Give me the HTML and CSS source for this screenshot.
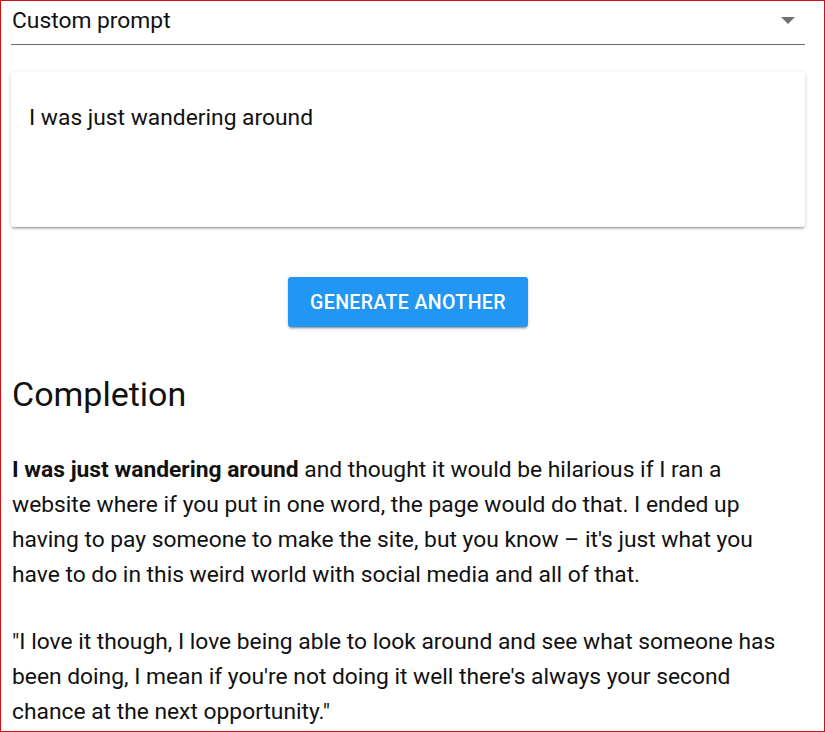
FILE: index.html
```html
<!DOCTYPE html>
<html>
<head>
 <meta charset="UTF-8">
 <title>Completion</title>
 <link rel="stylesheet" href="styles.css">
</head>
<body>
<div class="frame">
  <div class="select">
    <span class="select-text">Custom prompt</span>
    <span class="arrow"></span>
  </div>

  <div class="card">
    <div class="prompt">I was just wandering around</div>
  </div>

  <div class="actions">
    <button type="button" class="btn">Generate another</button>
  </div>

  <h2 class="title">Completion</h2>

  <p class="text"><b>I was just wandering around</b> and thought it would be hilarious if I ran a website where if you put in one word, the page would do that. I ended up having to pay someone to make the site, but you know – it's just what you have to do in this weird world with social media and all of that.</p>
  <p class="text">"I love it though, I love being able to look around and see what someone has been doing, I mean if you're not doing it well there's always your second chance at the next opportunity."</p>
</div>
</body>
</html>
```

FILE: styles.css
```css
html, body {
  margin: 0;
  padding: 0;
  background: #fff;
}
body {
  font-family: Roboto, "Liberation Sans", sans-serif;
  color: #111;
}
.frame {
  box-sizing: border-box;
  width: 825px;
  height: 732px;
  overflow: hidden;
  border: 1px solid #d01010;
  padding: 0 19px 0 10px;
}
.select {
  display: flex;
  align-items: center;
  justify-content: space-between;
  height: 43px;
  border-bottom: 1px solid #6b6b6b;
  padding: 0 10px 0 1px;
  margin-bottom: 27px;
}
.select-text {
  font-size: 22.8px;
  line-height: 38px;
  padding-bottom: 3px;
}
.arrow {
  width: 0;
  height: 0;
  border-left: 7px solid transparent;
  border-right: 7px solid transparent;
  border-top: 7px solid #707070;
  margin-bottom: 5px;
}
.card {
  height: 155px;
  box-sizing: border-box;
  padding: 31px 18px 0 18px;
  border-radius: 3px;
  box-shadow: 0 3px 1px -2px rgba(0,0,0,.2), 0 2px 2px 0 rgba(0,0,0,.14), 0 1px 5px 0 rgba(0,0,0,.12);
}
.prompt {
  font-size: 22.8px;
  line-height: 30px;
}
.actions {
  display: flex;
  justify-content: center;
  padding-top: 50px;
}
.btn {
  width: 240px;
  height: 50px;
  border: 0;
  border-radius: 3px;
  background: #2196f3;
  color: #fff;
  font-family: Roboto, "Liberation Sans", sans-serif;
  font-size: 19.5px;
  font-weight: 500;
  letter-spacing: 0.02em;
  text-transform: uppercase;
  padding-top: 2px;
  box-shadow: 0 3px 1px -2px rgba(0,0,0,.2), 0 2px 2px 0 rgba(0,0,0,.14), 0 1px 5px 0 rgba(0,0,0,.12);
}
.title {
  font-size: 34px;
  font-weight: 400;
  line-height: 40px;
  margin: 47px 0 0 1px;
  padding-bottom: 6px;
}
.text {
  font-size: 22.8px;
  line-height: 35px;
  margin: 32px 0 0 1px;
}
```
